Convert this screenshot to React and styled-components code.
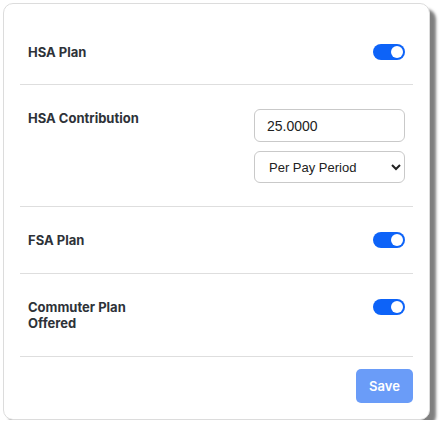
import React from "react";
import styled, { createGlobalStyle, css } from "styled-components";

const GlobalStyle = createGlobalStyle`
  body {
    margin: 0;
    background: #ffffff;
    font-family: "Inter", "Liberation Sans", sans-serif;
  }
`;

function Toggle() {
  return (
    <Switch>
      <Knob />
    </Switch>
  );
}

function App() {
  return (
    <Page>
      <GlobalStyle />
      <Card>
        <Row>
          <Label>HSA Plan</Label>
          <Toggle />
        </Row>
        <Row $variant="fields">
          <Label>HSA Contribution</Label>
          <Fields>
            <Input defaultValue="25.0000" />
            <Select defaultValue="per">
              <option value="per">Per Pay Period</option>
            </Select>
          </Fields>
        </Row>
        <Row $variant="spaced">
          <Label>FSA Plan</Label>
          <Toggle />
        </Row>
        <Row $variant="tall">
          <Label>
            Commuter Plan
            <br />
            Offered
          </Label>
          <Toggle />
        </Row>
        <Footer>
          <SaveButton disabled>Save</SaveButton>
        </Footer>
      </Card>
    </Page>
  );
}

export default App;

const Page = styled.div`
  padding: 3px 0 0 3px;
`;

const Card = styled.div`
  width: 393px;
  padding: 16px 16px 16px 16px;
  border: 1px solid #dcdcdc;
  border-radius: 10px;
  background: #fff;
  box-shadow: 6px 6px 3px rgba(0, 0, 0, 0.5);
`;

const rowVariants = {
  fields: css`
    align-items: flex-start;
    padding: 25px 8px 23px;
  `,
  spaced: css`
    padding: 25px 8px 25px;
  `,
  tall: css`
    align-items: flex-start;
    padding: 25px 8px 21px;
    min-height: 36px;
  `,
};

const Row = styled.div`
  display: flex;
  justify-content: space-between;
  align-items: center;
  padding: 24px 8px 24px;
  min-height: 16px;
  border-bottom: 1px solid #dedede;
  ${(p) => rowVariants[p.$variant]}
`;

const Label = styled.div`
  font-size: 13px;
  font-weight: 700;
  color: #2e3238;
  line-height: 16px;
`;

const Fields = styled.div`
  display: flex;
  flex-direction: column;
  gap: 9px;
  margin-top: -1px;
`;

const Input = styled.input`
  box-sizing: border-box;
  width: 151px;
  height: 33px;
  padding: 0 12px;
  border: 1px solid #c9c9c9;
  border-radius: 6px;
  font-family: "Liberation Sans", Arial, sans-serif;
  font-size: 14px;
  color: #222;
  outline: none;
`;

const Select = styled.select`
  box-sizing: border-box;
  width: 151px;
  height: 32px;
  padding: 0 10px;
  border: 1px solid #c9c9c9;
  border-radius: 6px;
  background: #fff;
  font-family: "Liberation Sans", Arial, sans-serif;
  font-size: 13px;
  color: #222;
`;

const Switch = styled.div`
  display: flex;
  align-items: center;
  justify-content: flex-end;
  box-sizing: border-box;
  width: 32px;
  height: 16px;
  padding: 2px;
  border-radius: 8px;
  background: #0d63f8;
`;

const Knob = styled.div`
  width: 12px;
  height: 12px;
  border-radius: 50%;
  background: #fff;
`;

const Footer = styled.div`
  display: flex;
  justify-content: flex-end;
  padding-top: 12px;
`;

const SaveButton = styled.button`
  width: 57px;
  height: 34px;
  border: none;
  border-radius: 5px;
  background: #6a9cf8;
  color: #fff;
  font-family: "Inter", "Liberation Sans", sans-serif;
  font-size: 13px;
  font-weight: 600;
`;
